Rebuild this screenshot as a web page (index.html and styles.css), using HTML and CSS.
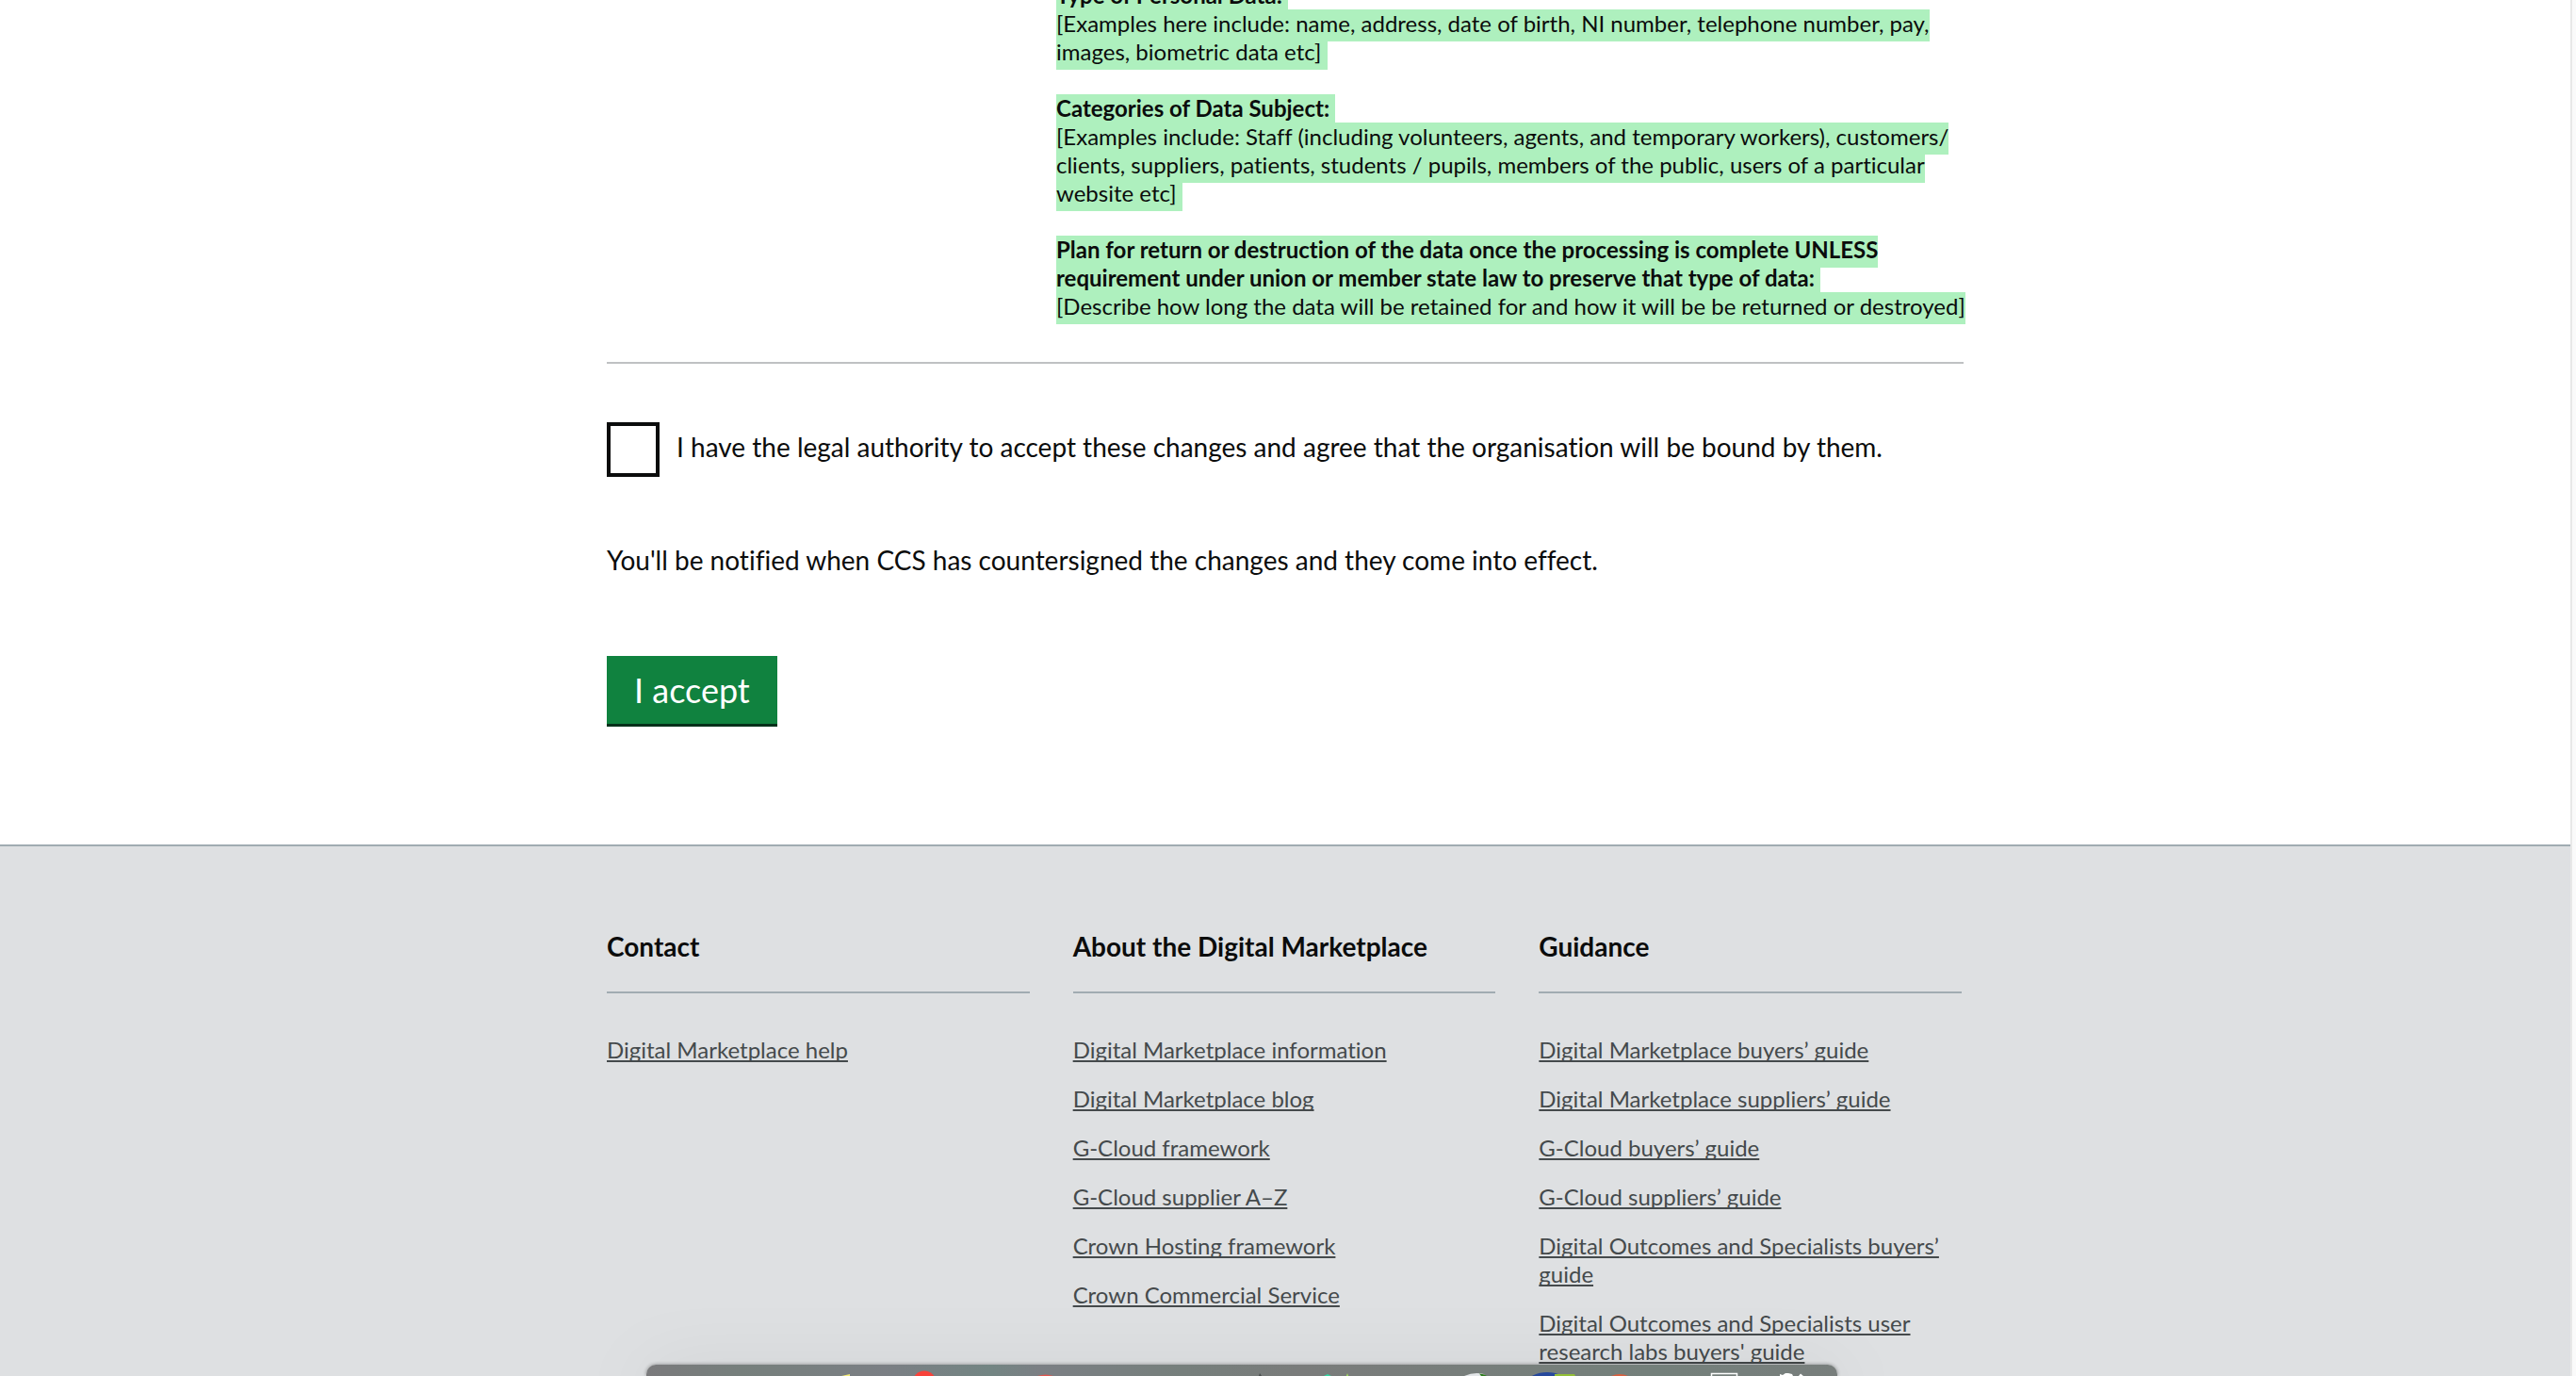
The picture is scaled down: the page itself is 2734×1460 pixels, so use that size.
FILE: index.html
```html
<!DOCTYPE html>
<html lang="en">
<head>
<meta charset="utf-8">
<meta name="viewport" content="width=device-width, initial-scale=1">
<title>Accept the framework agreement changes – Digital Marketplace</title>
<link rel="stylesheet" href="styles.css">
</head>
<body>
<div class="window">
  <div class="page">
    <main class="container">
      <section class="changes">
        <p class="change"><span class="inserted"><strong>Type of Personal Data:&nbsp;</strong><br>[Examples here include: name, address, date of birth, NI number, telephone number, pay,<br>images, biometric data etc]&nbsp;</span></p>
        <p class="change"><span class="inserted"><strong>Categories of Data Subject:&nbsp;</strong><br>[Examples include: Staff (including volunteers, agents, and temporary workers), customers/<br>clients, suppliers, patients, students / pupils, members of the public, users of a particular<br>website etc]&nbsp;</span></p>
        <p class="change"><span class="inserted"><strong>Plan for return or destruction of the data once the processing is complete UNLESS<br>requirement under union or member state law to preserve that type of data:&nbsp;</strong><br>[Describe how long the data will be retained for and how it will be be returned or destroyed]</span></p>
      </section>
      <form class="accept-form">
        <div class="authority">
          <input class="authority-box" type="checkbox" id="authority" name="authority">
          <label class="authority-label" for="authority">I have the legal authority to accept these changes and agree that the organisation will be bound by them.</label>
        </div>
        <p class="notice">You'll be notified when CCS has countersigned the changes and they come into effect.</p>
        <button class="button" type="submit">I accept</button>
      </form>
    </main>
    <footer class="footer">
      <div class="container footer-columns">
        <section>
          <h2 class="footer-heading">Contact</h2>
          <ul class="footer-links">
            <li><a href="#">Digital Marketplace help</a></li>
          </ul>
        </section>
        <section>
          <h2 class="footer-heading">About the Digital Marketplace</h2>
          <ul class="footer-links">
            <li><a href="#">Digital Marketplace information</a></li>
            <li><a href="#">Digital Marketplace blog</a></li>
            <li><a href="#">G-Cloud framework</a></li>
            <li><a href="#">G-Cloud supplier A–Z</a></li>
            <li><a href="#">Crown Hosting framework</a></li>
            <li><a href="#">Crown Commercial Service</a></li>
          </ul>
        </section>
        <section>
          <h2 class="footer-heading">Guidance</h2>
          <ul class="footer-links">
            <li><a href="#">Digital Marketplace buyers’ guide</a></li>
            <li><a href="#">Digital Marketplace suppliers’ guide</a></li>
            <li><a href="#">G-Cloud buyers’ guide</a></li>
            <li><a href="#">G-Cloud suppliers’ guide</a></li>
            <li><a href="#">Digital Outcomes and Specialists buyers’ guide</a></li>
            <li><a href="#">Digital Outcomes and Specialists user research labs buyers' guide</a></li>
          </ul>
        </section>
      </div>
    </footer>
  </div>
  <div class="scroll-track"></div>
</div>
<div class="dock">
  <svg class="dock-icons" width="1264" height="12" viewBox="0 0 1264 12" aria-hidden="true">
    <path d="M207 12l9-2v2z" fill="#f5ec7a"/>
    <circle cx="295" cy="19" r="12.500" fill="#f8423a"/>
    <path d="M415 12q9-3 17 0z" fill="#e0574f"/>
    <path d="M650 12l1-3 2 3z" fill="#4a4e4e"/>
    <path d="M719 12l4-2 4 2z" fill="#35d6a0"/>
    <path d="M743 12l1-3 1 3z" fill="#a6e65c"/>
    <path d="M868 12q11-5 21-2l1 2z" fill="#e3e6e8"/>
    <path d="M884 9.500q5 0 8 2.500h-6z" fill="#2e7d1e"/>
    <ellipse cx="956" cy="18" rx="20" ry="10" fill="#26489c"/>
    <path d="M964 12v-2h21l1 2z" fill="#92bf36"/>
    <path d="M1024 12q9-4 18 0z" fill="#d9603f"/>
    <path d="M1130.500 12v-2.500h27v2.500" fill="none" stroke="#fff" stroke-width="1.500"/>
    <path d="M1203 12v-2l3 1 3-2 3 0 4 1 1 2zM1223 12l2-2.500 3 2.500z" fill="#fff"/>
  </svg>
</div>
</body>
</html>
```
FILE: styles.css
```css
:root {
  --ink: #0b0c0c;
  --rule: #a1acb2;
}

* {
  box-sizing: border-box;
}

body {
  margin: 0;
  color: var(--ink);
  background: #fff;
  font-family: Lato, "Liberation Sans", sans-serif;
  font-size: 24px;
  font-variant-ligatures: no-common-ligatures;
  line-height: 30px;
}

.window {
  display: flex;
  height: 100vh;
  overflow: hidden;
}

.page {
  flex: 1;
  min-width: 0;
}

.scroll-track {
  width: 6px;
  border-left: 2px solid #e8e8e8;
  background: #fafafa;
}

.container {
  max-width: 1440px;
  margin: 0 auto;
}

/* Agreement changes, scrolled part-way under the top edge */
.changes {
  display: flex;
  flex-direction: column;
  gap: 30px;
  margin-top: -20px;
  padding: 0 0 44px 477px;
  border-bottom: 2px solid #bfc1c3;
}

.change {
  margin: 0;
  white-space: nowrap;
}

.inserted {
  padding-bottom: 5px;
  background: #aef0be;
}

.accept-form {
  padding: 62px 0 128px;
}

.authority {
  display: flex;
  gap: 18px;
}

.authority-box {
  appearance: none;
  flex: none;
  width: 56px;
  height: 58px;
  margin: 0;
  border: 4px solid var(--ink);
  background: #fff;
}

.authority-label,
.notice {
  font-size: 28px;
  line-height: 38px;
}

.authority-label {
  padding-top: 7px;
}

.notice {
  margin: 69px 0 83px;
}

.button {
  display: block;
  padding: 15px 29px;
  border: 0;
  color: #fff;
  background: #10823f;
  box-shadow: 0 3px 0 #04301a;
  font: inherit;
  font-size: 36px;
  line-height: 42px;
}

.footer {
  min-height: 100vh;
  padding: 87px 0;
  border-top: 2px solid var(--rule);
  background: #dee0e2;
}

.footer-columns {
  display: grid;
  grid-template-columns: repeat(3, 1fr);
  gap: 46px;
  padding-right: 2px;
}

.footer-heading {
  margin: 0 0 45px;
  padding-bottom: 29px;
  border-bottom: 2px solid var(--rule);
  font-size: 28px;
  line-height: 38px;
}

.footer-links {
  display: flex;
  flex-direction: column;
  gap: 22px;
  margin: 0;
  padding: 0;
  list-style: none;
}

.footer-links a {
  color: #454a4c;
  text-decoration: underline 2px;
  text-decoration-skip-ink: none;
  text-underline-offset: 2px;
}

/* Desktop dock peeking over the bottom edge */
.dock {
  position: fixed;
  bottom: 0;
  left: 686px;
  width: 1264px;
  height: 12px;
  border-radius: 10px 10px 0 0;
  background: linear-gradient(90deg, #7a7a7c, #767f7c 8%, #7b7f84 20%, #738583 29%, #7b7f84 33%, #767f7c 45%, #7a7c7b 55%, #74807b 85%, #787e7c);
  box-shadow: 0 0 4px rgba(0, 0, 0, 0.4), 0 20px 80px rgba(0, 0, 0, 0.25);
}

.dock-icons {
  display: block;
}
```
